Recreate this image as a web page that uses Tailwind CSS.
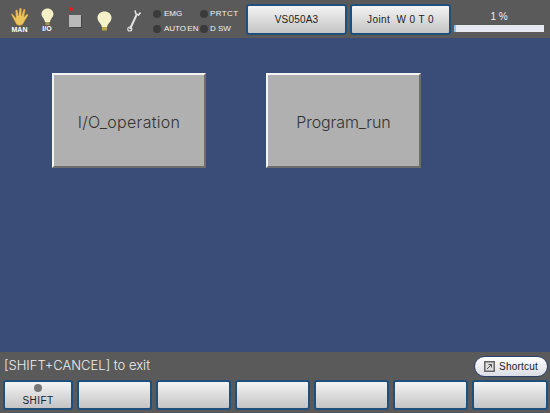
<!DOCTYPE html>
<html><head><meta charset="utf-8"><script src="https://cdn.jsdelivr.net/npm/@tailwindcss/browser@4"></script></head>
<body class="m-0">
<div class="w-[550px] h-[413px] overflow-hidden flex flex-col bg-[#394d78] font-['Liberation_Sans',sans-serif]">
  <!-- top bar -->
  <header class="h-[38px] shrink-0 bg-[#5a5a5a] flex items-start relative">
    <div class="w-[38px] h-[38px] shrink-0 flex flex-col items-center pl-[1px] pt-[7px]">
      <svg width="18" height="19" viewBox="0 0 18 19"><path d="M1 6.500 L5 11 L4.500 3.500 Q5.500 2 6.500 3.500 L7.500 9 L8.500 1.500 Q9.500 0.500 10.500 1.500 L10.500 9 L12.500 2.500 Q13.500 1.500 14.300 3 L13 10 L16 7 Q17.500 7 17 8.500 L13 15 Q12 18.500 8.500 18.500 Q5.500 18.500 4.500 15.500 L0.500 8 Q0 6.500 1 6.500 Z" fill="#ecc25a" stroke="#a77e25" stroke-width="0.4"/></svg>
      <span class="text-[7px] leading-[8px] text-white font-bold -mt-[0.5px]">MAN</span>
    </div>
    <div class="w-[18px] h-[38px] shrink-0 flex flex-col items-center pt-[8px]">
      <svg width="13" height="18" viewBox="0 0 13 18"><path d="M6.500 0.500 C10 0.500 12.500 3 12.500 6 C12.500 9 9.500 10.500 9 14 L4 14 C3.500 10.500 0.500 9 0.500 6 C0.500 3 3 0.500 6.500 0.500 Z" fill="#f4efc4"/><rect x="4.500" y="14" width="4" height="3" fill="#a89a4e"/></svg>
      <span class="text-[7px] leading-[8px] text-white font-bold -mt-[1px]">I/O</span>
    </div>
    <div class="w-[32px] h-[38px] shrink-0 flex flex-col items-center pl-[5px] pt-[7px]">
      <span class="block w-[4px] h-[4px] rounded-full bg-[#f01818] -ml-[8px]"></span>
      <span class="block w-[12px] h-[12px] mt-[4px] bg-[#b9b9b9] shadow-[1px_1px_0_#444]"></span>
    </div>
    <div class="w-[30px] h-[38px] shrink-0 flex justify-center pl-[2px] pt-[11px]">
      <svg width="15" height="20" viewBox="0 0 15 20"><path d="M7.500 0.500 C11.500 0.500 14.500 3 14.500 7 C14.500 10.500 10.800 12.500 10 16 L5 16 C4.200 12.500 0.500 10.500 0.500 7 C0.500 3 3.500 0.500 7.500 0.500 Z" fill="#f5f1c8"/><rect x="5" y="16" width="5" height="3.500" fill="#b7a544"/></svg>
    </div>
    <div class="w-[30px] h-[38px] shrink-0 flex justify-center pl-[1px] pt-[9px]">
      <svg width="14" height="23" viewBox="0 0 14 23"><path d="M3 20 L9.500 6" stroke="#e2e2e2" stroke-width="2" fill="none"/><circle cx="2.800" cy="20" r="2" fill="none" stroke="#e2e2e2" stroke-width="1.200"/><path d="M8 1.500 L9 5 L11.500 6 L13.500 3.500" fill="none" stroke="#e2e2e2" stroke-width="1.600"/></svg>
    </div>
    <div class="grid grid-cols-[47px_45px] grid-rows-[15px_15px] mt-[6px] ml-[5px] text-[8px] text-[#f2f2f2] shrink-0">
      <div class="flex items-center gap-[3px]"><span class="w-[8px] h-[8px] rounded-full bg-[#3a3a3a]"></span>EMG</div>
      <div class="flex items-center gap-[2px] tracking-[0.4px]"><span class="w-[8px] h-[8px] rounded-full bg-[#3a3a3a]"></span>PRTCT</div>
      <div class="flex items-center gap-[3px] [word-spacing:-1px] whitespace-nowrap"><span class="w-[8px] h-[8px] rounded-full bg-[#3a3a3a]"></span>AUTO EN</div>
      <div class="flex items-center gap-[2px]"><span class="w-[8px] h-[8px] rounded-full bg-[#3a3a3a]"></span>D SW</div>
    </div>
    <button class="w-[101px] h-[31px] mt-[4px] ml-[1px] shrink-0 rounded-[3px] border-2 border-[#1f4f7c] bg-gradient-to-b from-[#f4f4f4] to-[#c4c4c4] text-[10px] text-[#222] tracking-[0.2px]">VS050A3</button>
    <button class="w-[101px] h-[31px] mt-[4px] ml-[3px] shrink-0 rounded-[3px] border-2 border-[#1f4f7c] bg-gradient-to-b from-[#f4f4f4] to-[#c4c4c4] text-[10px] text-[#222] whitespace-pre tracking-[0.4px]">Joint  W 0 T 0</button>
    <div class="w-[90px] ml-[3px] shrink-0 flex flex-col items-center pt-[11px]">
      <span class="text-[10px] leading-[12px] text-[#eee] whitespace-pre">1 %</span>
      <div class="w-[90px] h-[7px] mt-[2px] bg-[#e6e9f0]"><div class="w-[2px] h-full bg-[#8fc0ea]"></div></div>
    </div>
  </header>

  <!-- main -->
  <main class="flex-1 flex items-start pl-[52px] pt-[35px] gap-[60px]">
    <button class="w-[154px] h-[95px] pt-[2px] bg-[#b0b0b0] border-2 border-t-[#f4f4f4] border-l-[#f4f4f4] border-r-[#6e6e6e] border-b-[#6e6e6e] text-[16px] tracking-[0.3px] text-[#333] font-['Inter',sans-serif] font-light">I/O_operation</button>
    <button class="w-[155px] h-[95px] pt-[2px] bg-[#b0b0b0] border-2 border-t-[#f4f4f4] border-l-[#f4f4f4] border-r-[#6e6e6e] border-b-[#6e6e6e] text-[16px] tracking-[-0.1px] text-[#333] font-['Inter',sans-serif] font-light">Program_run</button>
  </main>

  <!-- bottom -->
  <footer class="h-[61px] shrink-0 bg-[#5a5a5a] flex flex-col">
    <div class="h-[27px] flex items-center justify-between pl-[4px] pr-[2px]">
      <span class="text-[13px] text-[#eee] font-['Inter',sans-serif] font-light">[SHIFT+CANCEL] to exit</span>
      <button class="w-[74px] h-[21px] mt-[1px] rounded-full bg-gradient-to-b from-[#ffffff] to-[#dcdce4] border border-[#28406a] flex items-center justify-center gap-[4px] text-[10px] text-[#222] tracking-[0.2px]">
        <svg width="11" height="11" viewBox="0 0 11 11"><rect width="11" height="11" fill="#666"/><rect x="1.500" y="1.500" width="8" height="8" fill="#ddd"/><path d="M3 8 L7.500 3.500 M4.500 3.500 H7.500 V6.500" stroke="#555" fill="none"/></svg>
        Shortcut
      </button>
    </div>
    <div class="flex gap-[4px] pl-[3px] pt-[1px]">
      <button class="w-[70px] h-[30px] rounded-[3px] border-2 border-[#1f4f7c] bg-gradient-to-b from-[#f4f4f4] to-[#c4c4c4] flex flex-col items-center pt-[2px] text-[10px] leading-[10px] text-[#222] tracking-[0.4px]"><span class="w-[8px] h-[8px] rounded-full bg-[#777] mb-[4px]"></span>SHIFT</button>
      <button class="w-[75px] h-[30px] rounded-[3px] border-2 border-[#1f4f7c] bg-gradient-to-b from-[#f4f4f4] to-[#c4c4c4]"></button>
      <button class="w-[75px] h-[30px] rounded-[3px] border-2 border-[#1f4f7c] bg-gradient-to-b from-[#f4f4f4] to-[#c4c4c4]"></button>
      <button class="w-[75px] h-[30px] rounded-[3px] border-2 border-[#1f4f7c] bg-gradient-to-b from-[#f4f4f4] to-[#c4c4c4]"></button>
      <button class="w-[75px] h-[30px] rounded-[3px] border-2 border-[#1f4f7c] bg-gradient-to-b from-[#f4f4f4] to-[#c4c4c4]"></button>
      <button class="w-[75px] h-[30px] rounded-[3px] border-2 border-[#1f4f7c] bg-gradient-to-b from-[#f4f4f4] to-[#c4c4c4]"></button>
      <button class="w-[76px] h-[30px] rounded-[3px] border-2 border-[#1f4f7c] bg-gradient-to-b from-[#f4f4f4] to-[#c4c4c4]"></button>
    </div>
  </footer>
</div>
</body></html>
